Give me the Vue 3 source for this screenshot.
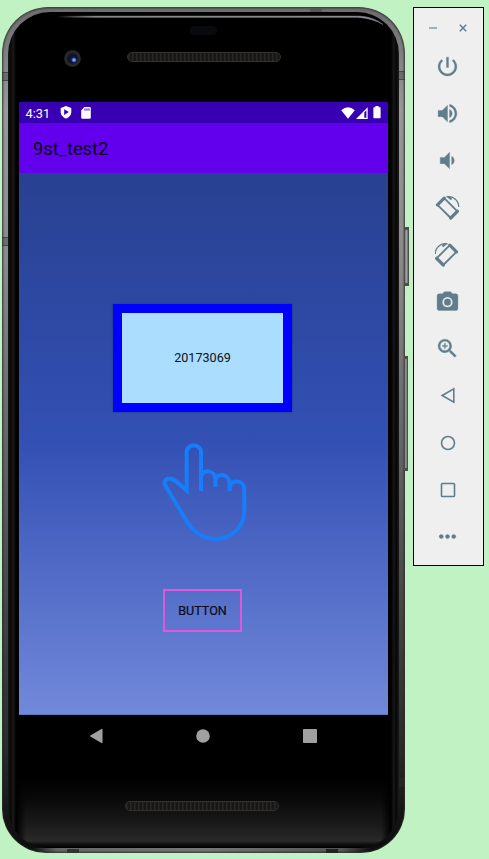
<script setup>
const tools = [
  { name: 'Power', d: 'M13 3h-2v10h2V3zm4.83 2.17l-1.42 1.42C17.99 7.86 19 9.81 19 12c0 3.87-3.13 7-7 7s-7-3.13-7-7c0-2.19 1.01-4.14 2.58-5.42L6.17 5.17C4.23 6.82 3 9.26 3 12c0 4.97 4.03 9 9 9s9-4.03 9-9c0-2.74-1.23-5.18-3.17-6.83z' },
  { name: 'Volume up', d: 'M3 9v6h4l5 5V4L7 9H3zm13.5 3c0-1.77-1.02-3.29-2.5-4.03v8.05c1.48-.73 2.5-2.25 2.5-4.02zM14 3.23v2.06c2.89.86 5 3.54 5 6.71s-2.11 5.85-5 6.71v2.06c4.01-.91 7-4.49 7-8.77s-2.99-7.86-7-8.77z' },
  { name: 'Volume down', d: 'M18.5 12c0-1.77-1.02-3.29-2.5-4.03v8.05c1.48-.73 2.5-2.25 2.5-4.02zM5 9v6h4l5 5V4L9 9H5z' },
  { name: 'Rotate left', kind: 'left' },
  { name: 'Rotate right', kind: 'right' },
  { name: 'Screenshot', d: 'M9 2.6 7.17 4.6H4c-1.1 0-2 .9-2 2v12c0 1.1.9 2 2 2h16c1.1 0 2-.9 2-2v-12c0-1.1-.9-2-2-2h-3.17L15 2.6H9zm3 15c-2.76 0-5-2.24-5-5s2.24-5 5-5 5 2.24 5 5-2.24 5-5 5zm0-8.2a3.2 3.2 0 1 0 0 6.4 3.2 3.2 0 0 0 0-6.4z' },
  { name: 'Zoom', d: 'M15.5 14h-.79l-.28-.27C15.41 12.59 16 11.11 16 9.5 16 5.91 13.09 3 9.5 3S3 5.91 3 9.5 5.91 16 9.5 16c1.61 0 3.09-.59 4.23-1.57l.27.28v.79l5 4.99L20.49 19l-4.99-5zm-6 0C7.01 14 5 11.99 5 9.5S7.01 5 9.5 5 14 7.01 14 9.5 11.99 14 9.5 14zm2.5-4h-2v2H9v-2H7V9h2V7h1v2h2v1z' },
  { name: 'Back', kind: 'back' },
  { name: 'Home', kind: 'home' },
  { name: 'Overview', kind: 'overview' },
  { name: 'More', d: 'M6 10c-1.1 0-2 .9-2 2s.9 2 2 2 2-.9 2-2-.9-2-2-2zm12 0c-1.1 0-2 .9-2 2s.9 2 2 2 2-.9 2-2-.9-2-2-2zm-6 0c-1.1 0-2 .9-2 2s.9 2 2 2 2-.9 2-2-.9-2-2-2z' },
]
</script>

<template>
  <main class="desk">
    <section class="phone">
      <i class="seam seam-lt"></i><i class="seam seam-lm"></i><i class="seam seam-rt"></i><i class="seam seam-rb"></i>
      <i class="side-key power-key"></i><i class="side-key volume-key"></i>
      <i class="joint joint-t"></i><i class="joint joint-b1"></i><i class="joint joint-b2"></i>
      <div class="glass">
        <header class="forehead">
          <svg class="glint" width="391" height="20" viewBox="0 0 391 20" fill="none">
            <defs>
              <linearGradient id="glint" x1="0" x2="1"><stop offset="0" stop-color="#999" stop-opacity="0" /><stop offset=".12" stop-color="#999" /><stop offset=".9" stop-color="#9a9fa2" /><stop offset="1" stop-color="#aab" stop-opacity=".6" /></linearGradient>
            </defs>
            <path d="M49 4.2H352Q366 5 375 12.5Q365 6.5 350 5.2H49Z" fill="url(#glint)" stroke="url(#glint)" stroke-width=".6" />
          </svg>
          <i class="sensor"></i>
          <i class="camera"></i>
          <i class="grille"></i>
        </header>
        <div class="screen">
          <div class="status">
            <span class="clock">4:31</span>
            <svg class="shield" width="12" height="13" viewBox="0 0 12 13"><path fill="#fff" d="M6 0 11.3 1.9V6C11.3 9 9 11.6 6 12.6 3 11.6.7 9 .7 6V1.9Z" /><path fill="#3700b3" d="M4.2 3.3 8.9 6.1 4.2 8.9Z" /></svg>
            <svg class="sd" width="10" height="12" viewBox="0 0 10 12"><path fill="#fff" d="M3.4 0H8.6Q9.8 0 9.8 1.2V10.6Q9.8 11.8 8.6 11.8H1.4Q.2 11.8.2 10.6V3.4Z" /><path stroke="#3700b3" stroke-width="1" d="M4 1.4V3.7M6 1.4V3.7M8 1.4V3.7" /></svg>
            <span class="grow"></span>
            <svg width="14" height="12" viewBox="0 0 14 12"><path fill="#fff" d="M.2 3.2Q7-2.8 13.8 3.2L7 11.7Z" /></svg>
            <svg class="signal" width="12" height="12" viewBox="0 0 12 12"><path fill="#fff" d="M0 12 11.7.2V12Z" /><path fill="#3700b3" d="M8.3 5.2 10.4 3.5V10.8H8.3Z" /></svg>
            <svg class="battery" width="8" height="13" viewBox="0 0 8 13"><path fill="#fff" d="M2.4 0H5.6V1.3H7.1Q7.6 1.3 7.6 1.9V11.6Q7.6 12.2 7 12.2H1Q.4 12.2.4 11.6V1.9Q.4 1.3 1 1.3H2.4Z" /></svg>
          </div>
          <div class="appbar">9st_test2</div>
          <div class="content">
            <button class="card">20173069</button>
            <svg class="hand" width="90" height="105" viewBox="30 30 270 315" fill="none" stroke="#167dfb" stroke-width="12">
              <path d="M153 183V67A21.5 21.5 0 0 0 110 67V182C94 168 80 152 66 147C50 141 38 153 47 168L108 270C128 305 160 327 195 327C245 327 283 290 283 243V177C283 149 240 147 239 172" />
              <path d="M239 183V161C239 129 197 127 196 152M196 171V149C196 118 155 116 153 142" />
            </svg>
            <button class="outlined">BUTTON</button>
          </div>
        </div>
        <nav class="nav">
          <svg width="14" height="16" viewBox="0 0 14 16"><path fill="#a0a0a0" d="M.5 8 12.5 1Q13.5.5 13.5 1.5V14.5Q13.5 15.5 12.5 15Z" /></svg>
          <svg width="14" height="14" viewBox="0 0 14 14"><circle cx="7" cy="7" r="6.8" fill="#a0a0a0" /></svg>
          <svg width="14" height="14" viewBox="0 0 14 14"><rect width="14" height="14" rx=".8" fill="#a0a0a0" /></svg>
        </nav>
        <footer class="chin"><i class="grille"></i></footer>
      </div>
    </section>

    <aside class="toolbar">
      <div class="window-row">
        <svg width="8" height="8" viewBox="0 0 8 8"><path d="M0 4H8" stroke="#92a5ae" stroke-width="1.7" /></svg>
        <svg width="8" height="8" viewBox="0 0 8 8"><path d="M.8.8 7.2 7.2M7.2.8.8 7.2" stroke="#607d8b" stroke-width="1.5" /></svg>
      </div>
      <div v-for="t in tools" :key="t.name" class="tool">
        <svg v-if="t.d" width="25" height="25" viewBox="0 0 24 24"><path :d="t.d" fill="#607d8b" stroke="#607d8b" stroke-width=".3" /></svg>
        <svg v-else width="25" height="25" viewBox="0 0 25 25" fill="none" stroke="#607d8b" stroke-width="1.6">
          <g v-if="t.kind === 'left' || t.kind === 'right'" :class="{ mirrored: t.kind === 'right' }">
            <path d="M2.5 9.8 9.2 3.1 22.4 16.3 15.7 23Z" stroke-width="1.8" stroke-linejoin="round" />
            <path d="M2.5 9.8 9.2 3.1M22.4 16.3 15.7 23" stroke-width="3.2" stroke-linecap="round" />
            <path d="M11.5 1.9C18 .6 23.7 5.4 23.8 12" stroke-width="1.3" />
            <path d="M11.3 1.5 14.5 1.2 17.2 3.7 15.8 5.2Z" fill="#607d8b" stroke="none" />
          </g>
          <path v-else-if="t.kind === 'back'" d="M7.2 12.5 18.8 5.8V19.2Z" />
          <circle v-else-if="t.kind === 'home'" cx="13" cy="13" r="6.5" />
          <rect v-else x="6.5" y="6.5" width="13" height="13" rx=".8" />
        </svg>
      </div>
    </aside>
  </main>
</template>

<style>
body { margin: 0; background: #c1f2c3; }
</style>

<style scoped>
* { box-sizing: border-box; }
i { display: block; }
svg { display: block; flex: none; }
button { padding: 0; margin: 0; border-radius: 0; font: 400 12.6px Roboto, sans-serif; color: #111; }
.desk {
  display: flex; align-items: flex-start; width: 489px; height: 859px; padding: 7px 0 0 2px;
  overflow: hidden; background: #c1f2c3; font-family: Roboto, sans-serif;
}
.phone {
  position: relative; flex: none; width: 403px; height: 846px; padding: 5px 6px;
  border-radius: 46px 46px 44px 44px;
  background:
    linear-gradient(90deg, transparent 30px, #666 55px, #777 50%, #555 340px, transparent 370px) 0 100% / 100% 5px no-repeat,
    linear-gradient(180deg, #6c6c6c 0, #999 12%, #8a8a8a 30%, #686868 50%, #474747 70%, #2a2a2a 88%, #141414 96%, #0c0c0c 100%);
  box-shadow: inset 0 0 0 1px rgba(50, 50, 50, .5), inset 0 0 1px 2px rgba(30, 30, 30, .3);
}
.glass {
  display: flex; flex-direction: column; height: 836px; padding: 0 11px; border-radius: 42px 42px 40px 40px;
  background:
    linear-gradient(90deg, #171717 0, #080808 3px, #1b1b1b 5px, #000 8px, transparent 18px, transparent 373px, #000 383px, #181818 386px, #050505 388px, #1b1b1b 391px),
    linear-gradient(180deg, #000 0, #000 765px, #080808 785px, #1a1a1a 812px, #292929 829px, #111 832px, #000 836px);
}
.forehead { position: relative; flex: none; height: 90px; }
.glint { position: absolute; left: -11px; top: 0; }
.sensor { position: absolute; left: 171px; top: 14px; width: 27px; height: 9px; border-radius: 5px; background: #090a0e; }
.camera {
  position: absolute; left: 45px; top: 38px; width: 17px; height: 17px; border-radius: 50%;
  background: radial-gradient(circle at 10px 10px, #b2c4ff 0, #4f6dcf 1.6px, transparent 2.8px), radial-gradient(circle, #141e50 0, #0b102b 4.5px, #242426 5.5px, #29292b 7.5px, #171717 9px);
}
.grille {
  width: 154px; height: 10px; border: 1px solid #34322e; border-radius: 5px;
  background: repeating-linear-gradient(90deg, #292725 0, #292725 1px, #181716 2px, #181716 4px);
}
.forehead .grille { position: absolute; left: 108px; top: 40px; }
.screen { flex: none; display: flex; flex-direction: column; width: 369px; height: 613px; }
.status { display: flex; align-items: center; height: 21px; padding: 0 7px 0 6.5px; background: #3700b3; }
.clock { width: 28px; color: #fff; font-size: 12.8px; line-height: 21px; padding-top: 1px; }
.shield { margin-left: 6.5px; }
.sd { margin-left: 8.5px; }
.grow { flex: 1; }
.signal { margin-left: 1px; }
.battery { margin-left: 5px; }
.appbar { height: 50px; padding-left: 14px; background: #6200ee; color: #080014; font-size: 18.3px; line-height: 52px; }
.content {
  flex: 1; display: flex; flex-direction: column; align-items: center; padding: 131px 2px 0 0;
  background: linear-gradient(180deg, #284191 0, #3350b4 50%, #7289da 100%);
  border-bottom: 1px solid #5d79bd;
}
.card {
  flex: none; width: 179px; height: 108px; padding-bottom: 2px; border: 9px solid #00f; background: #aaddff;
  box-shadow: 0 0 2px rgba(0, 0, 60, .35);
}
.hand { margin-top: 28px; margin-left: 4px; }
.outlined { flex: none; width: 79px; height: 43px; margin-top: 44px; border: 2px solid #e056dc; background: transparent; color: #0a0a20; -webkit-text-stroke: .2px #0a0a20; }
.nav { flex: none; display: flex; align-items: center; justify-content: space-between; height: 43px; padding: 0 71px 2px 70px; }
.chin { flex: none; padding: 43px 0 0 106px; }
.seam { position: absolute; width: 6px; height: 9px; background: rgba(50, 50, 50, .35); border: solid rgba(40, 40, 40, .5); border-width: 1px 0; }
.seam-lt { left: 0; top: 71px; }
.seam-lm { left: 0; top: 230px; }
.seam-lt { top: 65px; }
.seam-rt { right: 0; top: 64px; }
.seam-rb { right: 0; top: 771px; }
.side-key { position: absolute; border: 1px solid #4d4d4d; border-width: 3px 1px; background: linear-gradient(90deg, #777, #a2a2a2, #666); }
.power-key { left: 402px; top: 220px; width: 5px; height: 59px; }
.volume-key { left: 402px; top: 349px; width: 4px; height: 115px; }
.joint { position: absolute; width: 12px; height: 4px; background: #555; }
.joint-t { left: 308px; top: 1px; }
.joint-b1 { left: 65px; bottom: 0; background: #333; }
.joint-b2 { left: 324px; bottom: 0; background: #222; }
.toolbar { flex: none; width: 71px; height: 559px; margin-left: 8px; border: 1px solid #000; background: #efefef; }
.window-row { display: flex; justify-content: space-between; height: 35px; padding: 16px 16px 0 15px; }
.tool { display: flex; align-items: center; justify-content: center; height: 47px; padding-right: 2px; }
.mirrored { transform: translateX(24px) scaleX(-1); }
</style>
